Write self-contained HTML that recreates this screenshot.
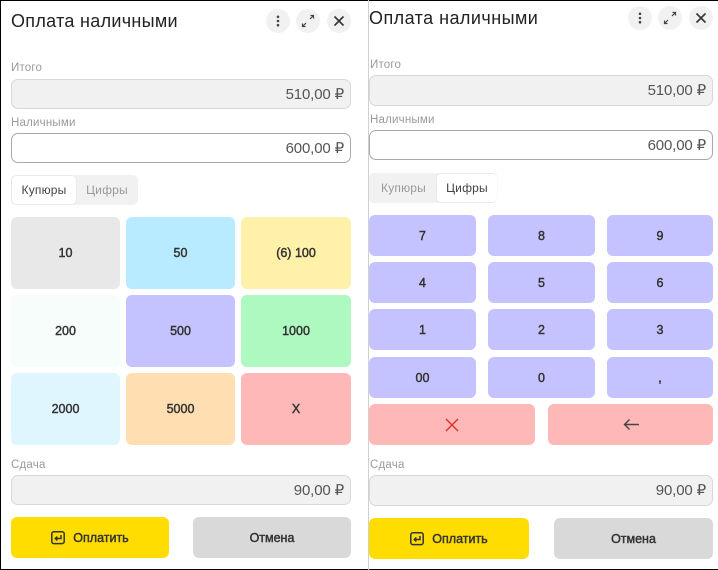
<!DOCTYPE html>
<html><head><meta charset="utf-8">
<style>
html,body{margin:0;padding:0;background:#fff}
#p{position:relative;width:718px;height:570px;overflow:hidden;background:#fff;font-family:"Liberation Sans",sans-serif;color:#222}
#p div{position:absolute;box-sizing:border-box}
.t{font-size:18px;letter-spacing:.3px;color:#222;line-height:22px;white-space:nowrap}
.l{font-size:11.5px;letter-spacing:.2px;color:#9a9a9a;line-height:14px;white-space:nowrap}
.i{border-radius:7px;border:1px solid #d8d8d8;background:#f1f1f1;font-size:15px;letter-spacing:-.15px;color:#555;text-align:right;padding-right:6px;line-height:29px}
.i.w{background:#fff;border:1px solid #a9a9a9}
.b{border-radius:6px;font-size:12.5px;font-weight:400;-webkit-text-stroke:.45px #333;color:#333;display:flex;align-items:center;justify-content:center;text-align:center}
.n{background:#c4c2ff}
.tb{background:#f1f1f1;border-radius:5px}
.ta{font-size:12px;letter-spacing:.2px;text-align:center;line-height:28px;color:#999;border-radius:4px}
.ta.on{background:#fff;color:#444;box-shadow:0 0 1px rgba(0,0,0,.18)}
.c{width:24px;height:24px;border-radius:50%;background:#f1f1f1}
.c svg{position:absolute;left:0;top:0}
.btn{border-radius:6px;font-size:12.5px;font-weight:400;-webkit-text-stroke:.45px #333;color:#333;display:flex;align-items:center;justify-content:center}
</style></head><body>
<div id="p">
<div style="left:0;top:0;width:718px;height:1px;background:#000"></div>
<div style="left:0;top:569px;width:718px;height:1px;background:#000"></div>
<div style="left:0;top:0;width:1px;height:570px;background:#000"></div>
<div style="left:368px;top:0;width:1px;height:570px;background:#d0d0d0"></div>

<!-- left -->
<div class="t" style="left:11px;top:10px">Оплата наличными</div>
<div class="c" style="left:266px;top:9px"><svg width="24" height="24"><circle cx="12" cy="7.800" r="1.3" fill="#444"/><circle cx="12" cy="12" r="1.3" fill="#444"/><circle cx="12" cy="16.200" r="1.3" fill="#444"/></svg></div>
<div class="c" style="left:296px;top:9px"><svg width="24" height="24" fill="none" stroke="#444" stroke-width="1.2"><path d="M14 10L17.500 6.500M14.500 6.500h3V9.500M10 14L6.500 17.500M6.500 14.500v3H9.500"/></svg></div>
<div class="c" style="left:327px;top:9px"><svg width="24" height="24" fill="none" stroke="#333" stroke-width="1.6"><path d="M7.500 7.500l9 9M16.500 7.500l-9 9"/></svg></div>

<div class="l" style="left:11px;top:61px">Итого</div>
<div class="i" style="left:11px;top:79px;width:340px;height:30px">510,00 ₽</div>
<div class="l" style="left:11px;top:116px">Наличными</div>
<div class="i w" style="left:11px;top:133px;width:340px;height:30px">600,00 ₽</div>
<div class="tb" style="left:11px;top:175px;width:127px;height:30px"></div>
<div class="ta on" style="left:12px;top:176px;width:64px;height:28px">Купюры</div>
<div class="ta" style="left:76px;top:176px;width:62px;height:28px">Цифры</div>

<div class="b" style="left:11px;top:217px;width:109px;height:72px;background:#e8e8e8">10</div>
<div class="b" style="left:126px;top:217px;width:109px;height:72px;background:#b8ebff">50</div>
<div class="b" style="left:241px;top:217px;width:110px;height:72px;background:#fff0aa">(6) 100</div>
<div class="b" style="left:11px;top:295px;width:109px;height:72px;background:#f6fdfa">200</div>
<div class="b" style="left:126px;top:295px;width:109px;height:72px;background:#c4c2ff">500</div>
<div class="b" style="left:241px;top:295px;width:110px;height:72px;background:#aef9c0">1000</div>
<div class="b" style="left:11px;top:373px;width:109px;height:72px;background:#e0f6ff">2000</div>
<div class="b" style="left:126px;top:373px;width:109px;height:72px;background:#ffdfb2">5000</div>
<div class="b" style="left:241px;top:373px;width:110px;height:72px;background:#ffb8b8">X</div>

<div class="l" style="left:11px;top:458px">Сдача</div>
<div class="i" style="left:11px;top:475px;width:340px;height:30px">90,00 ₽</div>
<div class="btn" style="left:11px;top:517px;width:158px;height:41px;background:#ffdd00"><svg width="14" height="14" style="margin-right:8px" fill="none" stroke="#333" stroke-width="1.5"><rect x=".8" y=".8" width="12.400" height="11.800" rx="2"/><path d="M10 4v3.500H4.500M6.300 5.600L4.300 7.500l2 1.900"/></svg>Оплатить</div>
<div class="btn" style="left:193px;top:517px;width:158px;height:41px;background:#d9d9d9">Отмена</div>

<!-- right -->
<div class="t" style="left:369px;top:7px;letter-spacing:.45px">Оплата наличными</div>
<div class="c" style="left:628px;top:6px"><svg width="24" height="24"><circle cx="12" cy="7.800" r="1.3" fill="#444"/><circle cx="12" cy="12" r="1.3" fill="#444"/><circle cx="12" cy="16.200" r="1.3" fill="#444"/></svg></div>
<div class="c" style="left:658px;top:6px"><svg width="24" height="24" fill="none" stroke="#444" stroke-width="1.2"><path d="M14 10L17.500 6.500M14.500 6.500h3V9.500M10 14L6.500 17.500M6.500 14.500v3H9.500"/></svg></div>
<div class="c" style="left:689px;top:6px"><svg width="24" height="24" fill="none" stroke="#333" stroke-width="1.6"><path d="M7.500 7.500l9 9M16.500 7.500l-9 9"/></svg></div>

<div class="l" style="left:370px;top:58px">Итого</div>
<div class="i" style="left:369px;top:75px;width:344px;height:31px;line-height:30px">510,00 ₽</div>
<div class="l" style="left:370px;top:113px">Наличными</div>
<div class="i w" style="left:369px;top:130px;width:344px;height:30px">600,00 ₽</div>
<div class="tb" style="left:369px;top:173px;width:128px;height:30px"></div>
<div class="ta" style="left:370px;top:174px;width:67px;height:28px">Купюры</div>
<div class="ta on" style="left:437px;top:174px;width:60px;height:28px">Цифры</div>

<div class="b n" style="left:369px;top:215px;width:107px;height:41px">7</div>
<div class="b n" style="left:488px;top:215px;width:107px;height:41px">8</div>
<div class="b n" style="left:607px;top:215px;width:106px;height:41px">9</div>
<div class="b n" style="left:369px;top:262px;width:107px;height:41px">4</div>
<div class="b n" style="left:488px;top:262px;width:107px;height:41px">5</div>
<div class="b n" style="left:607px;top:262px;width:106px;height:41px">6</div>
<div class="b n" style="left:369px;top:309px;width:107px;height:41px">1</div>
<div class="b n" style="left:488px;top:309px;width:107px;height:41px">2</div>
<div class="b n" style="left:607px;top:309px;width:106px;height:41px">3</div>
<div class="b n" style="left:369px;top:357px;width:107px;height:41px">00</div>
<div class="b n" style="left:488px;top:357px;width:107px;height:41px">0</div>
<div class="b n" style="left:607px;top:357px;width:106px;height:41px">,</div>
<div class="b" style="left:369px;top:404px;width:166px;height:41px;background:#ffb8b8"><svg width="16" height="16" fill="none" stroke="#e03131" stroke-width="1.5"><path d="M2 2l12 12M14 2L2 14"/></svg></div>
<div class="b" style="left:548px;top:404px;width:165px;height:41px;background:#ffb8b8"><svg width="16" height="14" fill="none" stroke="#444" stroke-width="1.4"><path d="M16 6.500H1.500M6.500 1.500L1.500 6.500l5 5"/></svg></div>

<div class="l" style="left:370px;top:458px">Сдача</div>
<div class="i" style="left:369px;top:475px;width:344px;height:31px;line-height:29px">90,00 ₽</div>
<div class="btn" style="left:369px;top:518px;width:160px;height:41px;background:#ffdd00"><svg width="14" height="14" style="margin-right:8px" fill="none" stroke="#333" stroke-width="1.5"><rect x=".8" y=".8" width="12.400" height="11.800" rx="2"/><path d="M10 4v3.500H4.500M6.300 5.600L4.300 7.500l2 1.900"/></svg>Оплатить</div>
<div class="btn" style="left:554px;top:518px;width:159px;height:41px;background:#d9d9d9">Отмена</div>
</div>
</body></html>
